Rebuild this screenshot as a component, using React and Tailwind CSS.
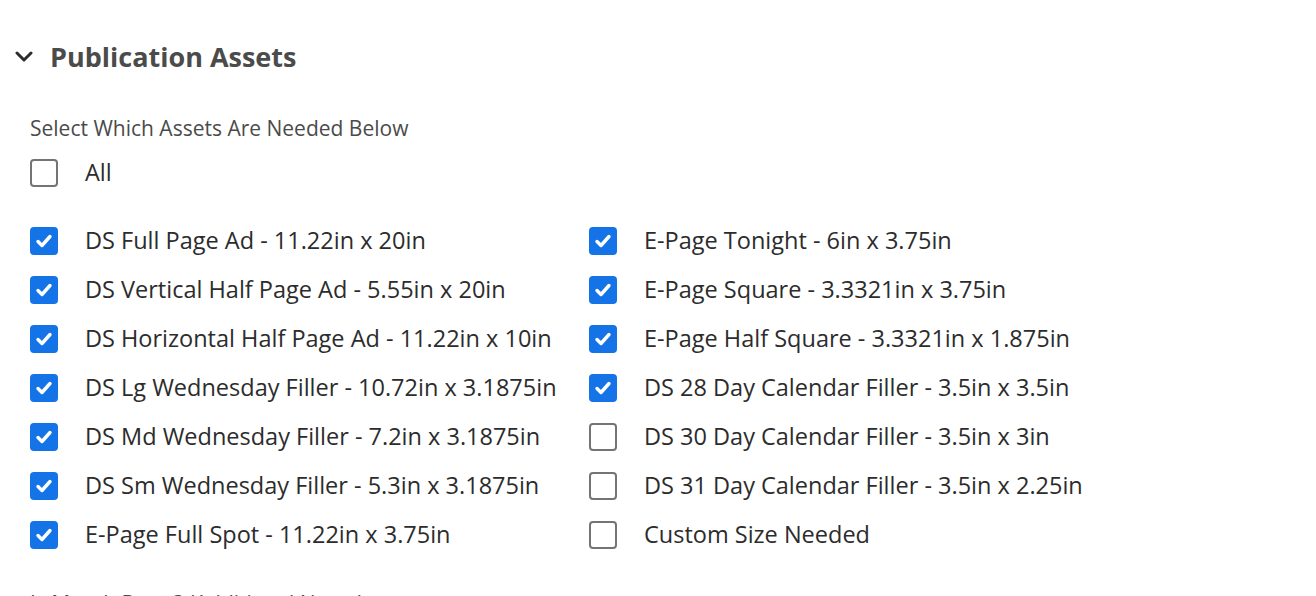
import { useState } from 'react'

const left = [
  { label: 'DS Full Page Ad - 11.22in x 20in', checked: true },
  { label: 'DS Vertical Half Page Ad - 5.55in x 20in', checked: true },
  { label: 'DS Horizontal Half Page Ad - 11.22in x 10in', checked: true },
  { label: 'DS Lg Wednesday Filler - 10.72in x 3.1875in', checked: true },
  { label: 'DS Md Wednesday Filler - 7.2in x 3.1875in', checked: true },
  { label: 'DS Sm Wednesday Filler - 5.3in x 3.1875in', checked: true },
  { label: 'E-Page Full Spot - 11.22in x 3.75in', checked: true },
]

const right = [
  { label: 'E-Page Tonight - 6in x 3.75in', checked: true },
  { label: 'E-Page Square - 3.3321in x 3.75in', checked: true },
  { label: 'E-Page Half Square - 3.3321in x 1.875in', checked: true },
  { label: 'DS 28 Day Calendar Filler - 3.5in x 3.5in', checked: true },
  { label: 'DS 30 Day Calendar Filler - 3.5in x 3in', checked: false },
  { label: 'DS 31 Day Calendar Filler - 3.5in x 2.25in', checked: false },
  { label: 'Custom Size Needed', checked: false },
]

const Box = ({ checked }) =>
  checked ? (
    <span className="flex h-[28px] w-[28px] shrink-0 items-center justify-center rounded-[4px] bg-[#1473e6]">
      <svg viewBox="0 0 20 20" className="h-[20px] w-[20px]" fill="none">
        <path d="M4 10.5l4 4 8-9" stroke="#fff" strokeWidth="3.4" strokeLinecap="round" strokeLinejoin="round" />
      </svg>
    </span>
  ) : (
    <span className="h-[28px] w-[28px] shrink-0 rounded-[4px] border-2 border-[#747474] bg-white" />
  )

const Row = ({ item }) => (
  <div className="flex h-[49px] items-center gap-[27px]">
    <Box checked={item.checked} />
    <span className="whitespace-nowrap text-[23.5px] text-[#2c2c2c]">{item.label}</span>
  </div>
)

export default function App() {
  const [open] = useState(true)

  return (
    <div className="h-[596px] overflow-hidden bg-white font-['Open_Sans',sans-serif]">
      {/* Section header */}
      <div className="flex h-[70px] items-end pl-[14px]">
        <div className="flex h-[26px] items-center gap-[16px]">
          <svg viewBox="0 0 20 12" className="h-[12px] w-[20px]" fill="none">
            <path d={open ? 'M3 2l7 7 7-7' : 'M7 2l7 7-7 7'} stroke="#2c2c2c" strokeWidth="3" strokeLinecap="round" strokeLinejoin="round" />
          </svg>
          <h2 className="text-[27px] font-bold text-[#4b4b4b]">Publication Assets</h2>
        </div>
      </div>

      <div className="pl-[30px] pt-[44px]">
        <p className="text-[21px] leading-[28px] text-[#4b4b4b]">Select Which Assets Are Needed Below</p>
        <div className="mt-[6px]">
          <Row item={{ label: 'All', checked: false }} />
        </div>

        <div className="mt-[19px] grid grid-cols-[559px_1fr]">
          <div className="flex flex-col">
            {left.map(item => <Row key={item.label} item={item} />)}
          </div>
          <div className="flex flex-col">
            {right.map(item => <Row key={item.label} item={item} />)}
          </div>
        </div>

        <p className="mt-[30px] text-[21px] leading-[28px] text-[#4b4b4b]">Is Month Done? (Additional Notes)</p>
      </div>
    </div>
  )
}
